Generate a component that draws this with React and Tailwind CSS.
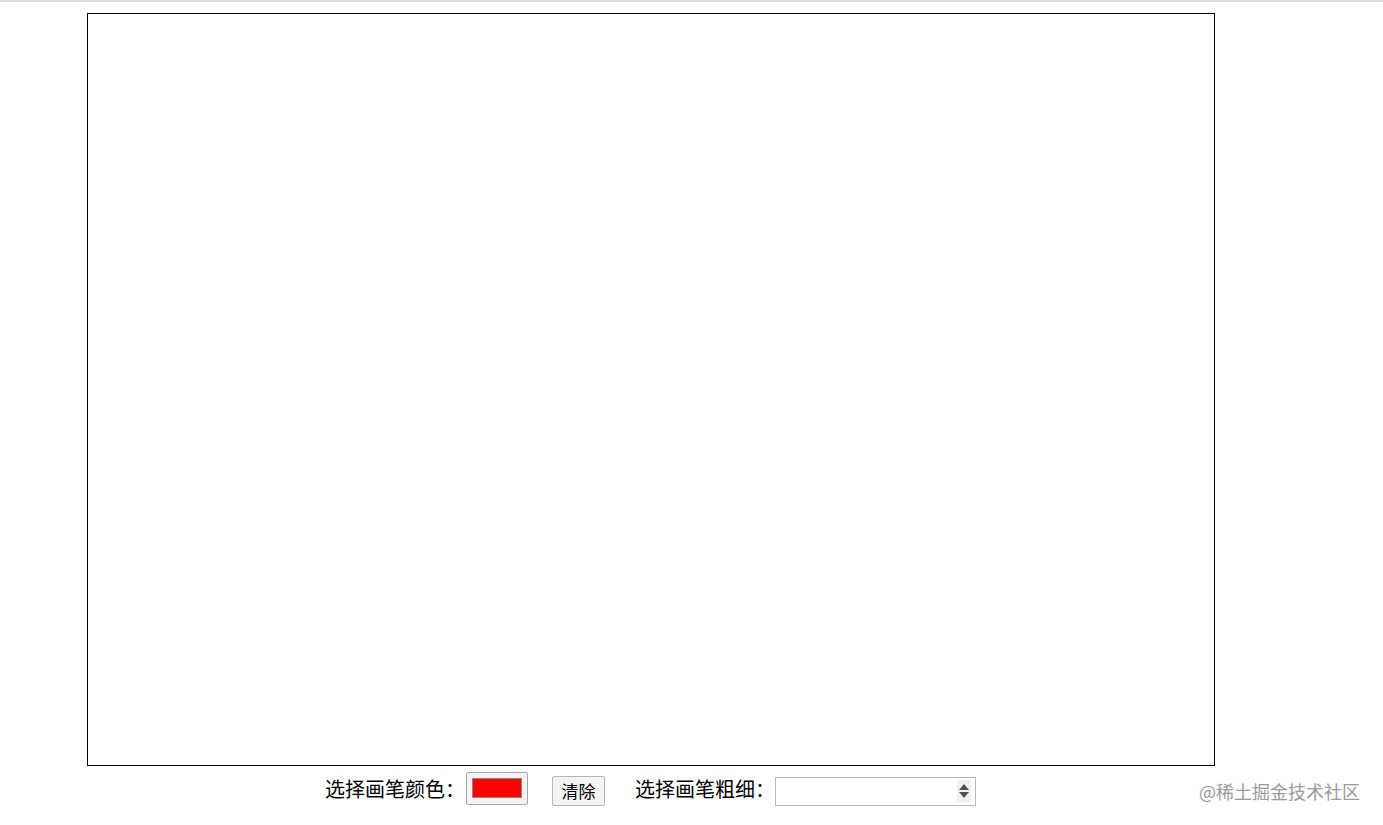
import React from 'react'

export default function App() {
  return (
    <div className="relative w-[1383px] h-[825px] bg-white overflow-hidden font-['Liberation_Sans','Noto_Sans_CJK_SC',sans-serif] text-black">
      {/* top rule */}
      <div className="h-[3px] border-t-2 border-[#dcdcdc]" />

      {/* drawing board */}
      <div className="ml-[87px] mt-[10px] w-[1128px] h-[753px] border border-black bg-white" />

      {/* toolbar */}
      <div className="flex items-center pl-[325px] mt-[5px] h-[36px] text-[20px] leading-none">
        <span className="font-['Noto_Sans_CJK_SC',sans-serif]">选择画笔颜色：</span>
        <div className="ml-[1px] w-[62px] h-[33px] border border-[#a6a6a6] bg-[#f3f3f3] rounded-[2px] flex items-center justify-center -mt-[2px]">
          <div className="w-[50px] h-[20px] bg-[#ff0000] border border-[#8a8a8a]" />
        </div>
        <button className="ml-[24px] w-[53px] h-[30px] mt-[3px] border border-[#b5b5b5] bg-[#f4f4f4] rounded-[2px] text-[17px] font-['Noto_Sans_CJK_SC',sans-serif] flex items-center justify-center">
          清除
        </button>
        <span className="ml-[30px] font-['Noto_Sans_CJK_SC',sans-serif]">选择画笔粗细：</span>
        <div className="mt-[4px] w-[201px] h-[29px] border border-[#b8b8b8] bg-white flex items-center justify-end pr-[4px]">
          <div className="w-[14px] h-[22px] bg-[#f0f0f0] flex flex-col items-center justify-center gap-[2px]">
            <svg width="10" height="6" viewBox="0 0 10 6"><path d="M5 0 L10 6 L0 6 Z" fill="#505050" /></svg>
            <svg width="10" height="6" viewBox="0 0 10 6"><path d="M0 0 L10 0 L5 6 Z" fill="#505050" /></svg>
          </div>
        </div>
      </div>

      {/* watermark */}
      <div className="absolute left-[1199px] top-[779px] text-[18px] leading-[24px] text-[#9a9a9a] font-['Noto_Sans_CJK_SC',sans-serif]">
        @稀土掘金技术社区
      </div>
    </div>
  )
}
